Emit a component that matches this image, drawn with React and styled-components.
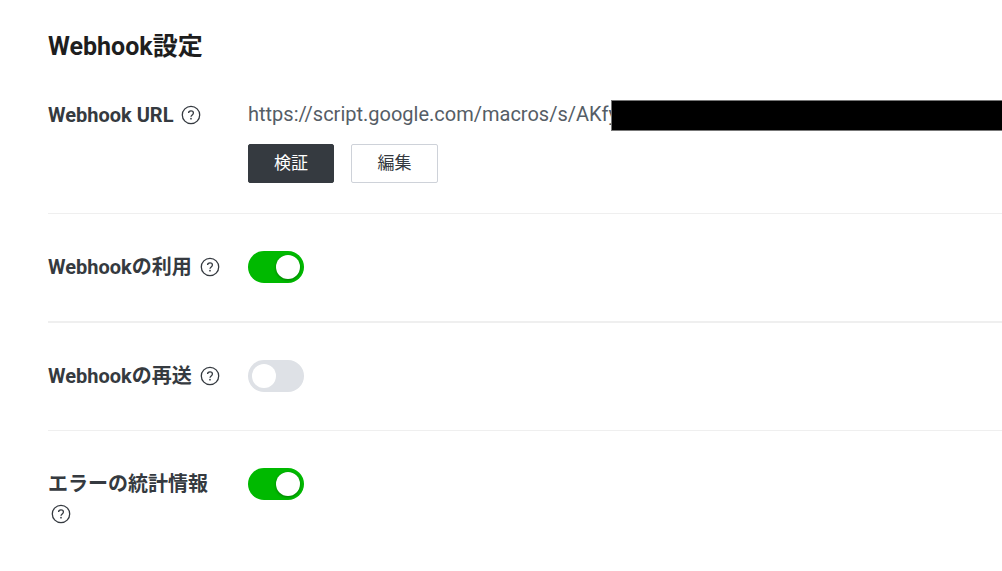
import React, { useState } from "react";
import styled, { createGlobalStyle, css } from "styled-components";

const GlobalStyle = createGlobalStyle`
  * { box-sizing: border-box; }
  body {
    margin: 0;
    background: #fff;
    color: #353a40;
    font-family: Roboto, "Noto Sans CJK JP", sans-serif;
    overflow-x: hidden;
  }
`;

const Page = styled.main`
  padding: 29px 0 0 48px;
`;

const Title = styled.h2`
  margin: 0;
  font-size: 25px;
  line-height: 36px;
  font-weight: 700;
  color: #1e1e1e;
`;

const Row = styled.div`
  display: grid;
  grid-template-columns: 176px minmax(0, 1fr);
  column-gap: 24px;
  align-items: start;
  padding: ${(p) => (p.$first ? "34px 0 30px" : "37px 0 38px")};
  border-bottom: ${(p) => (p.$last ? "0" : p.$thick ? "2px" : "1px")} solid #efefef;
`;

const Label = styled.div`
  padding-top: 1px;
  font-size: 20px;
  line-height: 30px;
  font-weight: 700;
`;

const HelpButton = styled.button`
  display: inline-block;
  width: 20px;
  height: 20px;
  margin: 0 0 0 3px;
  padding: 0;
  border: 0;
  background: none;
  color: #353a40;
  vertical-align: -3px;
  cursor: pointer;

  svg { display: block; }
`;

const UrlLine = styled.div`
  display: flex;
  align-items: flex-start;
  height: 32px;
`;

const Url = styled.span`
  font-size: 20px;
  line-height: 30px;
  color: #555d66;
  white-space: nowrap;
`;

const Redaction = styled.span`
  flex: 1;
  align-self: flex-end;
  height: 31px;
  margin-left: -7px;
  background: #000;
  border: solid #777;
  border-width: 1px 0 1px 1px;
`;

const Actions = styled.div`
  display: flex;
  gap: 17px;
  margin-top: 13px;
`;

const ActionButton = styled.button`
  width: 87px;
  height: 39px;
  padding: 0 0 4px;
  border: 1px solid #ced2d9;
  border-radius: 2px;
  background: #fff;
  color: #353a40;
  font-family: inherit;
  font-size: 17px;
  cursor: pointer;

  ${(p) => p.$primary && css`
    width: 86px;
    border-color: #353a40;
    background: #353a40;
    color: #fff;
  `}
`;

const Switch = styled.input`
  appearance: none;
  display: block;
  width: 56px;
  height: 32px;
  margin: 0;
  padding: 4px;
  border-radius: 16px;
  background: #dee1e6;
  cursor: pointer;

  &::before {
    content: "";
    display: block;
    width: 24px;
    height: 24px;
    border-radius: 50%;
    background: #fff;
  }

  &:checked {
    background: #00b900;
  }

  &:checked::before {
    margin-left: auto;
    box-shadow: 0 1px 3px rgba(0, 0, 0, 0.35);
  }
`;

function Help({ topic }) {
  return (
    <HelpButton type="button" aria-label={`${topic} ヘルプ`}>
      <svg width="20" height="20" viewBox="0 0 20 20" fill="none" stroke="currentColor">
        <circle cx="10" cy="10" r="8.7" strokeWidth="1.3" />
        <path d="M7.6 8.1C7.6 6.7 8.6 5.9 10 5.9s2.4.8 2.4 2.1c0 1.9-2.4 1.9-2.4 3.8" strokeWidth="1.3" />
        <circle cx="10" cy="13.7" r="0.85" fill="currentColor" stroke="none" />
      </svg>
    </HelpButton>
  );
}

const settings = [
  { id: "use", label: "Webhookの利用", on: true, thick: true },
  { id: "redelivery", label: "Webhookの再送", on: false },
  { id: "stats", label: "エラーの統計情報", on: true },
];

function SettingRow({ id, label, on, thick, last }) {
  const [checked, setChecked] = useState(on);
  return (
    <Row $thick={thick} $last={last}>
      <Label>
        <label htmlFor={id}>{label}</label> <Help topic={label} />
      </Label>
      <Switch id={id} type="checkbox" checked={checked} onChange={(e) => setChecked(e.target.checked)} />
    </Row>
  );
}

export default function App() {
  return (
    <Page>
      <GlobalStyle />
      <Title>Webhook設定</Title>
      <Row $first>
        <Label>
          Webhook URL <Help topic="Webhook URL" />
        </Label>
        <div>
          <UrlLine>
            <Url>https://script.google.com/macros/s/AKfy</Url>
            <Redaction />
          </UrlLine>
          <Actions>
            <ActionButton type="button" $primary>検証</ActionButton>
            <ActionButton type="button">編集</ActionButton>
          </Actions>
        </div>
      </Row>
      {settings.map((s, i) => (
        <SettingRow key={s.id} {...s} last={i === settings.length - 1} />
      ))}
    </Page>
  );
}
